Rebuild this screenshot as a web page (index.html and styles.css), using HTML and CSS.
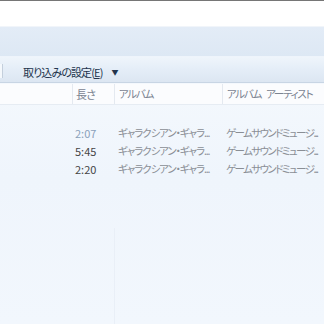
FILE: index.html
```
<!DOCTYPE html>
<html lang="ja">
<head>
    <meta charset="UTF-8">
    <title>ライブラリ</title>
    <link rel="stylesheet" href="styles.css">
</head>
<body>
    <div class="window">
        <div class="top-edge"></div>
        <div class="address"></div>
        <div class="nav-band"></div>
        <div class="toolbar">
            <span class="tb-edge"></span>
            <span class="tb-button">取り込みの設定(<u>E</u>)<span class="arrow">&#9660;</span></span>
        </div>
        <div class="list-header">
            <span class="col c-num"></span>
            <span class="col c-len">長さ</span>
            <span class="col c-album">アルバム</span>
            <span class="col c-artist">アルバム<span class="gap"> </span>アーティスト</span>
        </div>
        <div class="list-body">
            <div class="row">
                <span class="col c-num"></span>
                <span class="col c-len pending">2:07</span>
                <span class="col c-album">ギャラクシアン・ギャラ...</span>
                <span class="col c-artist">ゲームサウンドミュージ...</span>
            </div>
            <div class="row">
                <span class="col c-num"></span>
                <span class="col c-len">5:45</span>
                <span class="col c-album">ギャラクシアン・ギャラ...</span>
                <span class="col c-artist">ゲームサウンドミュージ...</span>
            </div>
            <div class="row">
                <span class="col c-num"></span>
                <span class="col c-len">2:20</span>
                <span class="col c-album">ギャラクシアン・ギャラ...</span>
                <span class="col c-artist">ゲームサウンドミュージ...</span>
            </div>
            <div class="filler">
                <span class="col c-num"></span>
                <span class="col c-len"></span>
                <span class="col c-album divider"></span>
            </div>
        </div>
    </div>
</body>
</html>
```

FILE: styles.css
```
html, body {
    margin: 0;
    padding: 0;
}
body {
    width: 324px;
    height: 324px;
    overflow: hidden;
    font-family: "Noto Sans CJK JP", "Noto Sans", sans-serif;
    font-size: 11px;
    font-feature-settings: "palt";
}
.window {
    display: flex;
    flex-direction: column;
    height: 324px;
    background: linear-gradient(180deg, #f8fbfe 0%, #eff5fc 55%, #f2f7fd 100%);
}
.top-edge {
    height: 1px;
    background: #767676;
}
.address {
    height: 25px;
    background: #ffffff;
}
.nav-band {
    height: 29px;
    border-top: 1px solid #f1f5fa;
    background: linear-gradient(180deg, #e3ecf7 0%, #dde8f4 100%);
}
.toolbar {
    display: flex;
    align-items: center;
    height: 24px;
    padding-top: 1px;
    border-top: 1px solid #eef4fb;
    border-bottom: 1px solid #c8d5e4;
    background: linear-gradient(180deg, #eff5fb 0%, #e5eef8 45%, #dce6f2 100%);
}
.tb-edge {
    width: 2px;
    height: 14px;
    margin-top: 2px;
    border-right: 1px solid #c4cfdc;
    background: #f4f8fc;
}
.tb-button {
    margin-left: 20px;
    margin-top: 4px;
    color: #22344d;
    letter-spacing: -0.9px;
}
.arrow {
    display: inline-block;
    margin-left: 9px;
    font-size: 7px;
    vertical-align: 2px;
}
.list-header {
    display: flex;
    height: 20px;
    margin-top: 1px;
    align-items: center;
    background: #fbfcfe;
    border-bottom: 1px solid #e6ecf3;
    color: #7a8391;
}
.col {
    display: block;
    box-sizing: border-box;
    padding-left: 4px;
    white-space: nowrap;
    font-size: 10.5px;
    letter-spacing: -1.3px;
}
.gap {
    display: inline-block;
    width: 5px;
}
.c-num { width: 72px; padding-left: 0; }
.c-len { width: 42px; padding-left: 3px; font-size: 11px; letter-spacing: 0; }
.c-album { width: 108px; }
.c-artist { width: 102px; padding-left: 4px; }
.list-header .col {
    height: 20px;
    line-height: 20px;
}
.list-header .c-len { letter-spacing: -0.9px; }
.list-header .c-len,
.list-header .c-album,
.list-header .c-artist {
    border-left: 1px solid #e4e9f0;
}
.list-body {
    display: flex;
    flex-direction: column;
    flex: 1;
    padding-top: 19px;
}
.row {
    display: flex;
    height: 18px;
    line-height: 18px;
}
.row .c-len { color: #444444; }
.row .c-len.pending { color: #8aa0ba; }
.row .c-album,
.row .c-artist { color: #8a8e95; }
.row .c-album { letter-spacing: -1.1px; }
.row .c-artist { letter-spacing: -1.6px; }
.filler {
    display: flex;
    flex: 1;
    margin-top: 50px;
}
.divider {
    border-left: 1px solid #e9eff7;
}
```
